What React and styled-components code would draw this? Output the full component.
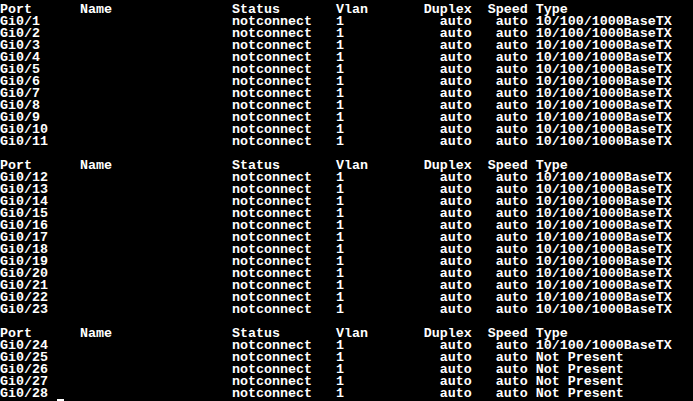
import styled, { createGlobalStyle } from 'styled-components'

const GlobalStyle = createGlobalStyle`
  html, body {
    margin: 0;
    padding: 0;
    background: #000;
  }
`

const Screen = styled.div`
  width: 693px;
  height: 401px;
  overflow: hidden;
  background: #000;
  color: #fff;
  font-family: 'Liberation Mono', 'DejaVu Sans Mono', monospace;
  font-weight: 700;
  font-size: 13.333px;
  line-height: 12px;
  padding-top: 4px;
  box-sizing: border-box;
`

const Block = styled.section`
  margin-bottom: 12px;

  &:last-child {
    margin-bottom: 0;
  }
`

const Line = styled.div`
  display: flex;
  height: 12px;
  white-space: pre;
`

const Cell = styled.span`
  display: inline-block;
  width: ${(p) => p.$w}ch;
  flex: none;
  text-align: ${(p) => p.$align || 'left'};
`

const Cursor = styled.span`
  display: inline-block;
  width: 7px;
  height: 11px;
  margin-left: 9px;
  vertical-align: top;
  border-bottom: 2px solid #fff;
`

const columns = [
  { key: 'port', label: 'Port', w: 10 },
  { key: 'name', label: 'Name', w: 19 },
  { key: 'status', label: 'Status', w: 13 },
  { key: 'vlan', label: 'Vlan', w: 11 },
  { key: 'duplex', label: 'Duplex', w: 6, align: 'right' },
  { key: 'gap', label: '', w: 2 },
  { key: 'speed', label: 'Speed', w: 5, align: 'right' },
  { key: 'gap2', label: '', w: 1 },
  { key: 'type', label: 'Type', w: 20 },
]

const makePorts = (from, to, type = () => '10/100/1000BaseTX') =>
  Array.from({ length: to - from + 1 }, (_, i) => {
    const n = from + i
    return {
      port: `Gi0/${n}`,
      name: '',
      status: 'notconnect',
      vlan: '1',
      duplex: 'auto',
      speed: 'auto',
      type: type(n),
    }
  })

const blocks = [
  makePorts(1, 11),
  makePorts(12, 23),
  makePorts(24, 28, (n) => (n === 24 ? '10/100/1000BaseTX' : 'Not Present')),
]

export default function App() {
  return (
    <>
      <GlobalStyle />
      <Screen>
        {blocks.map((rows, bi) => (
          <Block key={bi}>
            <Line>
              {columns.map((c) => (
                <Cell key={c.key} $w={c.w} $align={c.align === 'right' ? 'left' : 'left'}>
                  {c.label}
                </Cell>
              ))}
            </Line>
            {rows.map((r, ri) => {
              const isLast = bi === blocks.length - 1 && ri === rows.length - 1
              return (
                <Line key={r.port}>
                  {columns.map((c) => (
                    <Cell key={c.key} $w={c.w} $align={c.align}>
                      {r[c.key] || ''}
                      {isLast && c.key === 'port' && <Cursor />}
                    </Cell>
                  ))}
                </Line>
              )
            })}
          </Block>
        ))}
      </Screen>
    </>
  )
}
